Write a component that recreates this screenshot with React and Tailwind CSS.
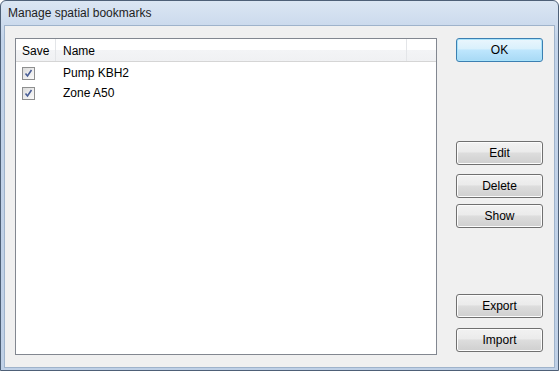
import React from "react";

const font = { fontFamily: '"Liberation Sans", Arial, sans-serif' };

function Check() {
  return (
    <span className="w-[13px] h-[13px] border border-[#8e8f8f] bg-gradient-to-br from-[#dcdcdc] to-[#fbfbfb] flex items-center justify-center">
      <svg width="9" height="9" viewBox="0 0 9 9">
        <path d="M1.5 4.5 L3.5 7 L7.5 1" fill="none" stroke="#4a5f97" strokeWidth="1.6" />
      </svg>
    </span>
  );
}

function Btn({ children, primary, className = "" }) {
  return (
    <button
      className={
        "w-[87px] h-[24px] rounded-[3px] border text-[12px] text-black flex items-center justify-center " +
        (primary
          ? "border-[#3c7fb1] bg-[linear-gradient(#eaf6fd_0%,#d9f0fc_45%,#bee6fd_50%,#a7d9f5_100%)] shadow-[inset_0_0_0_1px_#a8e3fb] "
          : "border-[#707070] bg-[linear-gradient(#f2f2f2_0%,#ebebeb_45%,#dddddd_50%,#cfcfcf_100%)] shadow-[inset_0_0_0_1px_#fcfcfc] ") +
        className
      }
    >
      {children}
    </button>
  );
}

export default function App() {
  const rows = ["Pump KBH2", "Zone A50"];
  return (
    <div className="w-[559px] h-[371px] flex flex-col bg-[linear-gradient(#dbe6f3,#c2d3e9_40px,#bfd0e6)] border border-[#4e6077] rounded-t-[6px] overflow-hidden" style={font}>
      {/* title bar */}
      <div className="h-[24px] pl-[7px] flex items-center text-[12px] text-[#1e1e1e]">
        Manage spatial bookmarks
      </div>

      {/* client area */}
      <div className="flex-1 mx-[3px] mb-[2px] bg-[#f0f0f0] border border-[#9fb3cb] flex pl-[10px] pt-[12px] pb-[11px]">
        {/* list view */}
        <div className="w-[422px] h-[317px] border border-[#828790] bg-white flex flex-col">
          <div className="h-[23px] flex border-b border-[#d5d5d5] bg-[linear-gradient(#ffffff_0%,#ffffff_50%,#f3f4f6_50%,#f0f1f3_100%)] text-[12px] text-black">
            <div className="w-[40px] pl-[6px] pt-[2px] flex items-center border-r border-[#e3e5e8]">Save</div>
            <div className="w-[351px] pl-[7px] pt-[2px] flex items-center border-r border-[#e3e5e8]">Name</div>
            <div className="flex-1" />
          </div>
          <div className="pt-[1px]">
            {rows.map((r) => (
              <div key={r} className="h-[20px] flex items-center text-[12px] text-black">
                <div className="w-[40px] pl-[6px] flex items-center">
                  <Check />
                </div>
                <div className="pl-[7px]">{r}</div>
              </div>
            ))}
          </div>
        </div>

        {/* buttons */}
        <div className="ml-[19px] flex flex-col">
          <Btn primary>OK</Btn>
          <Btn className="mt-[79px]">Edit</Btn>
          <Btn className="mt-[9px]">Delete</Btn>
          <Btn className="mt-[6px]">Show</Btn>
          <Btn className="mt-[66px]">Export</Btn>
          <Btn className="mt-[10px]">Import</Btn>
        </div>
      </div>
    </div>
  );
}
